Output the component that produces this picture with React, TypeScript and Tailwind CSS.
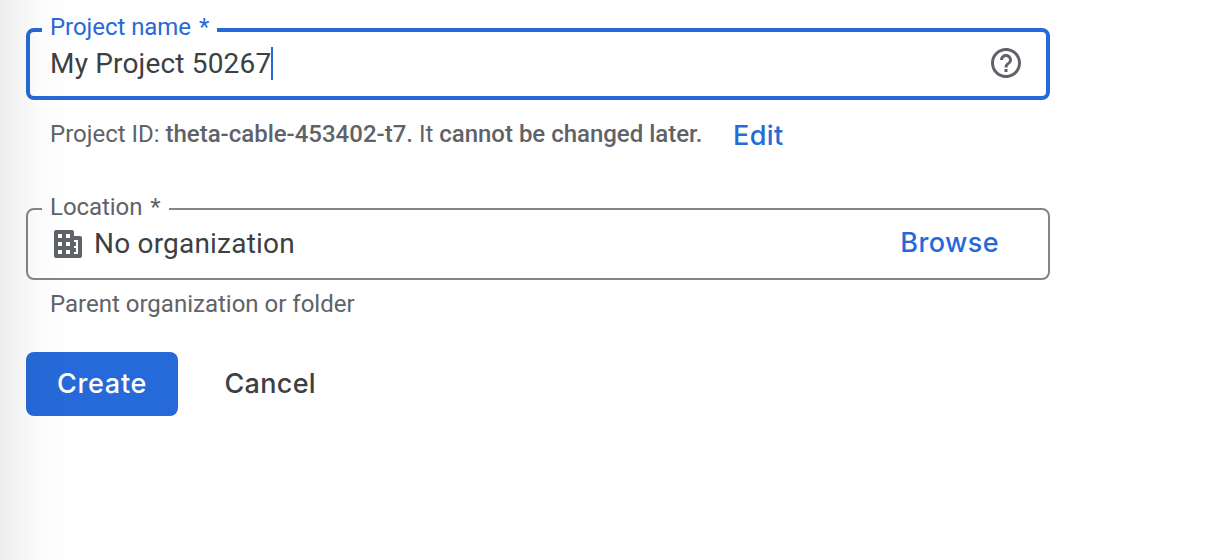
import type { ReactNode } from "react";
import { MdHelpOutline } from "react-icons/md";

type FieldProps = { label: string; legendClass: string; className: string; children: ReactNode };

function OutlinedField({ label, legendClass, className, children }: FieldProps) {
  return (
    <fieldset className={`h-[72px] w-[1024px] rounded-[8px] ${className}`}>
      <legend className={`flex items-center whitespace-nowrap px-2 text-[24px] ${legendClass}`}>
        <span className="-mt-[6px] leading-none">{label}<span className="ml-[2px]"> *</span></span>
      </legend>
      {children}
    </fieldset>
  );
}

function OrganizationIcon() {
  return (
    <svg viewBox="0 0 28 28" className="ml-1 size-7" fill="currentColor" fillRule="evenodd">
      <path d="M2 0h16q2 0 2 2v4h6q2 0 2 2v18q0 2-2 2H2q-2 0-2-2V2Q0 0 2 0ZM4 4v4h4V4ZM12 4v4h4V4ZM4 12v4h4v-4ZM12 12v4h4v-4ZM4 20v4h4v-4ZM12 20v4h4v-4ZM20 10v2h2v4h-2v2h2v4h-2v2h4V10Z" />
    </svg>
  );
}

export default function App() {
  return (
    <main className="relative h-[560px] w-[1222px] overflow-hidden bg-white pl-[26px] pt-7 font-['Roboto',sans-serif] text-[#5f6368]">
      <OutlinedField
        label="Project name"
        className="border-4 border-[#2669d8] pl-3"
        legendClass="h-1 w-[175px] tracking-[-0.05px] text-[#2669d8]"
      >
        <div className="flex h-[62px] items-center justify-between pl-2 pr-[22px]">
          <div className="flex items-center">
            <span className="w-[221px] whitespace-nowrap text-[28px] leading-[33px] tracking-[0.18px] text-[#3c4043]">My Project 50267</span>
            <span className="h-[33px] w-[2px] bg-[#2669d8]" />
          </div>
          <MdHelpOutline className="size-9" />
        </div>
      </OutlinedField>

      <div className="flex h-[108px] pl-6">
        <p className="mt-5 w-[683px] whitespace-nowrap text-[24px] leading-7 tracking-[-0.01px]">
          Project ID: <b className="font-medium">theta-cable-453402-t7.</b> It <b className="font-medium">cannot be changed later.</b>
        </p>
        <button className="mt-[18px] h-9 font-['Inter',sans-serif] text-[27px] font-medium leading-9 tracking-[0.4px] text-[#2669d8]">Edit</button>
      </div>

      <OutlinedField
        label="Location"
        className="border-2 border-[#80868b] pl-[14px]"
        legendClass="h-[2px] w-[127px] pt-[2px] tracking-[-0.05px]"
      >
        <div className="flex h-[68px] items-center pl-2 pr-[49px]">
          <OrganizationIcon />
          <span className="ml-3 text-[28px] leading-8 tracking-[0.2px] text-[#3c4043]">No organization</span>
          <button className="ml-auto pb-[2px] font-['Inter',sans-serif] text-[27px] font-medium leading-8 tracking-[0.4px] text-[#2669d8]">Browse</button>
        </div>
      </OutlinedField>

      <p className="mt-[10px] h-7 pl-6 text-[24px] leading-7">Parent organization or folder</p>

      <div className="mt-[34px] flex font-['Inter',sans-serif] text-[27px] font-medium">
        <button className="h-16 w-[152px] rounded-[8px] bg-[#2669d8] tracking-[0.7px] text-white">Create</button>
        <button className="ml-[46.5px] h-16 tracking-[0.3px] text-[#3c4043]">Cancel</button>
      </div>

      <div className="pointer-events-none absolute inset-y-0 left-0 w-[72px] bg-[linear-gradient(to_right,rgba(0,0,0,0.075),rgba(0,0,0,0.045)_25%,rgba(0,0,0,0.014)_55%,transparent)]" />
    </main>
  );
}
